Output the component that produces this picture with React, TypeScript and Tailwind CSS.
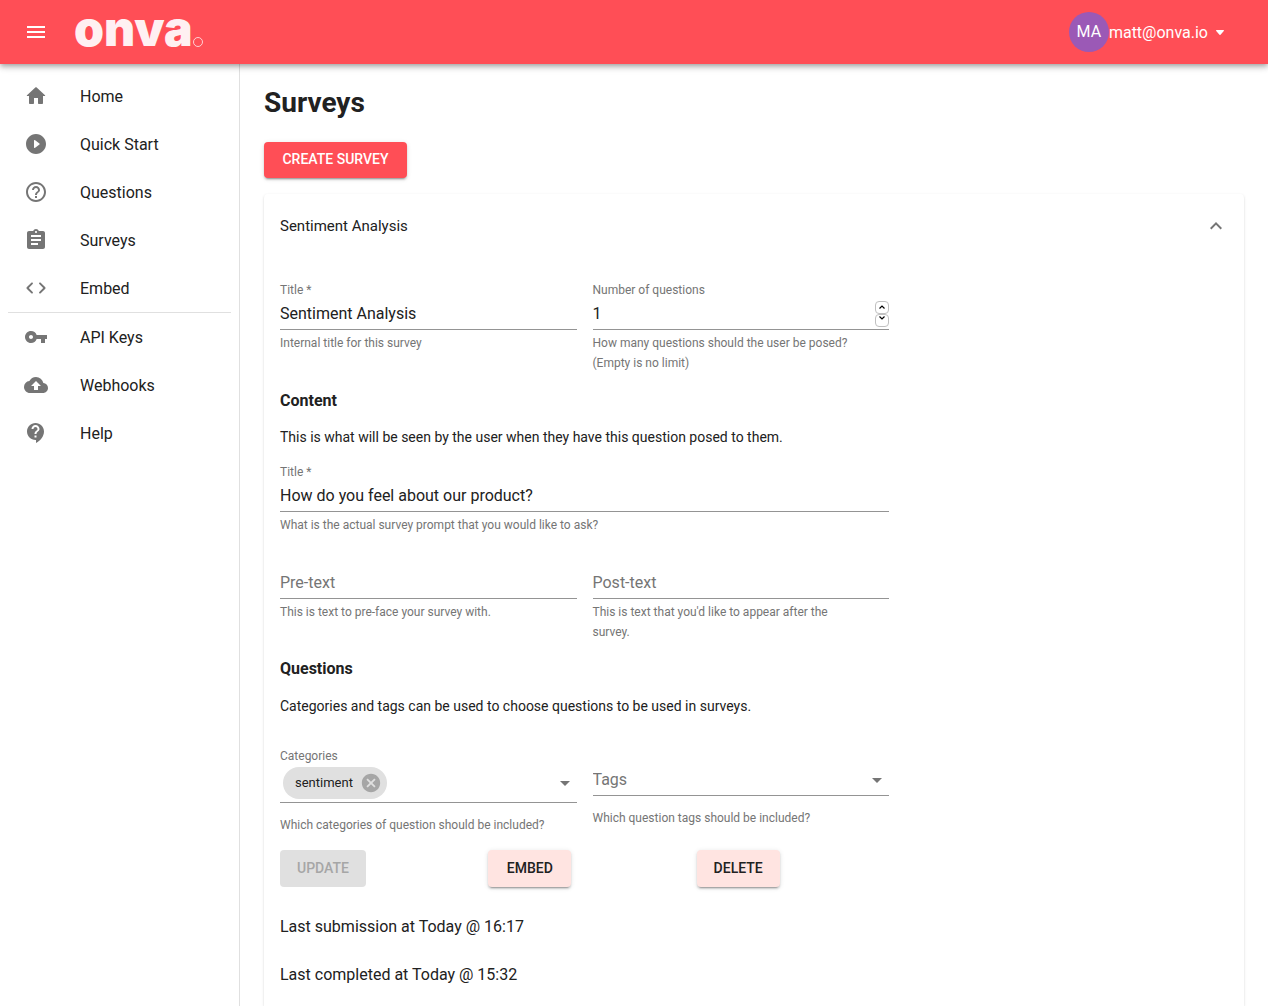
import React from "react";
import {
  MdArrowDropDown,
  MdAssignment,
  MdBackup,
  MdCancel,
  MdContactSupport,
  MdExpandLess,
  MdHelpOutline,
  MdMenu,
  MdVpnKey,
} from "react-icons/md";

const HOME_PATH =
  "M10 19v-5h4v5c0 .55.45 1 1 1h3c.55 0 1-.45 1-1v-7h1.7c.46 0 .68-.57.33-.87L12.67 3.6c-.38-.34-.96-.34-1.34 0l-8.36 7.53c-.34.3-.13.87.33.87H5v7c0 .55.45 1 1 1h3c.55 0 1-.45 1-1z";
const PLAY_PATH =
  "M12 2C6.48 2 2 6.48 2 12s4.48 10 10 10 10-4.48 10-10S17.52 2 12 2zm-2 13.5v-7c0-.41.47-.65.8-.4l4.67 3.5c.27.2.27.6 0 .8l-4.67 3.5c-.33.25-.8.01-.8-.4z";
const CODE_PATH =
  "M8.7 15.9L4.8 12l3.9-3.9c.39-.39.39-1.01 0-1.4-.39-.39-1.01-.39-1.4 0l-4.59 4.59c-.39.39-.39 1.02 0 1.41l4.59 4.6c.39.39 1.01.39 1.4 0 .39-.39.39-1.01 0-1.4zm6.6 0l3.9-3.9-3.9-3.9c-.39-.39-.39-1.01 0-1.4.39-.39 1.01-.39 1.4 0l4.59 4.59c.39.39.39 1.02 0 1.41l-4.59 4.6c-.39.39-1.01.39-1.4 0-.39-.39-.39-1.01 0-1.4z";

function PathIcon({ d }: { d: string }) {
  return (
    <svg viewBox="0 0 24 24" className="size-6" fill="currentColor" aria-hidden="true">
      <path d={d} />
    </svg>
  );
}

function NavItem({ icon, label }: { icon: React.ReactNode; label: string }) {
  return (
    <li>
      <a href="#" className="flex h-12 items-center px-6 text-base hover:bg-black/5">
        <span className="w-14 shrink-0 text-[#757575]">{icon}</span>
        <span className="pt-0.5">{label}</span>
      </a>
    </li>
  );
}

function Helper({ id, children }: { id: string; children: React.ReactNode }) {
  return (
    <p id={id} className="mt-[3px] pr-6 text-xs leading-5 text-[#757575]">
      {children}
    </p>
  );
}

type FieldProps = {
  id: string;
  label?: string;
  value?: string;
  placeholder?: string;
  helper: string;
};

function TextField({ id, label, value, placeholder, helper }: FieldProps) {
  return (
    <div className="min-w-0">
      {label && (
        <label htmlFor={id} className="block text-xs leading-4 text-[#757575]">
          {label}
        </label>
      )}
      <input
        id={id}
        type="text"
        defaultValue={value}
        placeholder={placeholder}
        aria-label={label ? undefined : placeholder}
        aria-describedby={`${id}-help`}
        className="block h-8 w-full border-b border-[#949494] bg-transparent text-base outline-none placeholder:text-[#757575]"
      />
      <Helper id={`${id}-help`}>{helper}</Helper>
    </div>
  );
}

function NumberField() {
  const [count, setCount] = React.useState("1");
  const step = (by: number) => setCount(String(Math.max(0, Number(count) + by)));
  const stepper =
    "flex h-[13px] w-3.5 items-center justify-center rounded border border-[#c0c0c0] bg-white text-black";
  return (
    <div className="min-w-0">
      <label htmlFor="count" className="block text-xs leading-4 text-[#757575]">
        Number of questions
      </label>
      <div className="flex h-8 items-center border-b border-[#949494]">
        <input
          id="count"
          type="text"
          inputMode="numeric"
          value={count}
          onChange={(e) => setCount(e.target.value)}
          aria-describedby="count-help"
          className="min-w-0 flex-1 bg-transparent text-base outline-none"
        />
        <div className="flex flex-col">
          <button type="button" aria-label="Increase" className={stepper} onClick={() => step(1)}>
            <svg viewBox="0 0 6 4" className="h-1 w-1.5" fill="none" stroke="currentColor" strokeWidth="1.2">
              <path d="M0.5 3.5L3 1l2.5 2.5" />
            </svg>
          </button>
          <button type="button" aria-label="Decrease" className={stepper} onClick={() => step(-1)}>
            <svg viewBox="0 0 6 4" className="mb-1 h-1 w-1.5" fill="none" stroke="currentColor" strokeWidth="1.2">
              <path d="M0.5 0.5L3 3l2.5-2.5" />
            </svg>
          </button>
        </div>
      </div>
      <Helper id="count-help">
        How many questions should the user be posed? (Empty is no limit)
      </Helper>
    </div>
  );
}

const softButton =
  "h-[37px] rounded bg-[#ffe4e1] px-4 pb-0.5 text-sm font-medium uppercase shadow-[0_3px_1px_-2px_rgba(0,0,0,0.2),0_2px_2px_0_rgba(0,0,0,0.14),0_1px_5px_0_rgba(0,0,0,0.12)]";

export default function App() {
  return (
    <div className="flex min-h-screen flex-col bg-white font-[Roboto,sans-serif] text-[#212121]">
      <header className="relative z-10 flex h-16 items-center bg-[#ff4e56] pr-11 pl-6 text-white shadow-[0_2px_4px_-1px_rgba(0,0,0,0.2),0_4px_5px_0_rgba(0,0,0,0.14),0_1px_10px_0_rgba(0,0,0,0.12)]">
        <button type="button" aria-label="Toggle menu">
          <MdMenu className="size-6" />
        </button>
        <a href="#" aria-label="onva" className="ml-[26px] flex h-16 items-center text-[#fff0f2]">
          <span className="pb-1.5 font-[Inter,sans-serif] text-[48px] leading-[58px] font-black">
            onva
          </span>
          <svg viewBox="0 0 10 10" className="mt-5 size-2.5" fill="none" stroke="currentColor" strokeWidth="0.8">
            <circle cx="5" cy="5" r="4.5" />
          </svg>
        </a>
        <button type="button" className="ml-auto flex items-center text-base">
          <span className="flex size-10 items-center justify-center rounded-full bg-[#9b59b6]">MA</span>
          <span className="pt-0.5">matt@onva.io</span>
          <svg viewBox="0 0 8 5" className="ml-2 h-[5px] w-2" fill="currentColor" aria-hidden="true">
            <path d="M.6 0h6.8c.5 0 .8.6.4 1L4.5 4.7a.7.7 0 0 1-1 0L.2 1C-.2.6.1 0 .6 0z" />
          </svg>
        </button>
      </header>

      <div className="flex flex-1">
        <nav className="w-60 shrink-0 border-r border-[#e0e0e0] pt-2">
          <ul>
            <NavItem icon={<PathIcon d={HOME_PATH} />} label="Home" />
            <NavItem icon={<PathIcon d={PLAY_PATH} />} label="Quick Start" />
            <NavItem icon={<MdHelpOutline className="size-6" />} label="Questions" />
            <NavItem icon={<MdAssignment className="size-6" />} label="Surveys" />
            <NavItem icon={<PathIcon d={CODE_PATH} />} label="Embed" />
          </ul>
          <hr className="mx-2 border-[#e0e0e0]" />
          <ul>
            <NavItem icon={<MdVpnKey className="size-6" />} label="API Keys" />
            <NavItem icon={<MdBackup className="size-6" />} label="Webhooks" />
            <NavItem icon={<MdContactSupport className="size-6" />} label="Help" />
          </ul>
        </nav>

        <main className="flex min-w-0 flex-1 flex-col items-start px-6 pt-[21px]">
          <h1 className="text-[28px] leading-9 font-bold">Surveys</h1>
          <button
            type="button"
            className="mt-[21px] h-9 min-w-[143px] rounded bg-[#ff4e56] px-4 pb-0.5 text-sm font-medium text-white uppercase shadow-[0_3px_1px_-2px_rgba(0,0,0,0.2),0_2px_2px_0_rgba(0,0,0,0.14),0_1px_5px_0_rgba(0,0,0,0.12)]"
          >
            Create Survey
          </button>

          <section className="mt-4 w-full flex-1 rounded-t px-4 pb-4 shadow-[0_2px_1px_-1px_rgba(0,0,0,0.2),0_1px_1px_0_rgba(0,0,0,0.14),0_1px_3px_0_rgba(0,0,0,0.12)]">
            <button
              type="button"
              aria-expanded="true"
              className="flex h-16 w-full items-center justify-between text-[15px]"
            >
              Sentiment Analysis
              <MdExpandLess className="size-6 text-[#757575]" />
            </button>

            <form className="mt-6 max-w-[609px]" onSubmit={(e) => e.preventDefault()}>
              <div className="grid grid-cols-2 gap-4">
                <TextField
                  id="title"
                  label="Title *"
                  value="Sentiment Analysis"
                  helper="Internal title for this survey"
                />
                <NumberField />
              </div>

              <h2 className="mt-4 text-base leading-6 font-bold">Content</h2>
              <p className="mt-3.5 mb-[17px] text-sm leading-5">
                This is what will be seen by the user when they have this question posed to them.
              </p>
              <TextField
                id="prompt"
                label="Title *"
                value="How do you feel about our product?"
                helper="What is the actual survey prompt that you would like to ask?"
              />
              <div className="mt-8 grid grid-cols-2 gap-4">
                <TextField
                  id="pre"
                  placeholder="Pre-text"
                  helper="This is text to pre-face your survey with."
                />
                <TextField
                  id="post"
                  placeholder="Post-text"
                  helper="This is text that you'd like to appear after the survey."
                />
              </div>

              <h2 className="mt-[15px] text-base leading-6 font-bold">Questions</h2>
              <p className="mt-[15px] text-sm leading-5">
                Categories and tags can be used to choose questions to be used in surveys.
              </p>

              <div className="mt-8 grid grid-cols-2 items-start gap-4">
                <div className="min-w-0">
                  <label htmlFor="categories" className="block text-xs leading-4 text-[#757575]">
                    Categories
                  </label>
                  <div className="flex h-[39px] items-center border-b border-[#949494] pl-[3px]">
                    <span className="flex h-8 items-center rounded-full bg-[#e0e0e0] pr-[5px] pl-3 text-[13px]">
                      sentiment
                      <button type="button" aria-label="Remove sentiment" className="ml-[7px] text-[#a6a6a6]">
                        <MdCancel className="size-[22px]" />
                      </button>
                    </span>
                    <select
                      id="categories"
                      aria-describedby="categories-help"
                      className="h-8 min-w-0 flex-1 appearance-none bg-transparent outline-none"
                    />
                    <MdArrowDropDown className="size-6 text-[#757575]" />
                  </div>
                  <p id="categories-help" className="mt-3 text-xs leading-5 text-[#757575]">
                    Which categories of question should be included?
                  </p>
                </div>
                <div className="min-w-0 pt-4">
                  <div className="flex h-8 items-center border-b border-[#949494]">
                    <select
                      aria-label="Tags"
                      aria-describedby="tags-help"
                      className="h-7 min-w-0 flex-1 appearance-none bg-transparent text-base text-[#757575] outline-none"
                    >
                      <option>Tags</option>
                    </select>
                    <MdArrowDropDown className="size-6 text-[#757575]" />
                  </div>
                  <p id="tags-help" className="mt-3 text-xs leading-5 text-[#757575]">
                    Which question tags should be included?
                  </p>
                </div>
              </div>

              <div className="mt-[15px] grid grid-cols-3 justify-items-start gap-4">
                <button
                  type="submit"
                  disabled
                  className="h-[37px] min-w-[86px] rounded bg-[#e0e0e0] px-4 pb-0.5 text-sm font-medium text-[#a6a6a6] uppercase"
                >
                  Update
                </button>
                <button type="button" className={softButton + " min-w-[83px]"}>
                  Embed
                </button>
                <button type="button" className={softButton + " min-w-[83px]"}>
                  Delete
                </button>
              </div>
            </form>

            <p className="mt-7 text-base leading-6">Last submission at Today @ 16:17</p>
            <p className="mt-6 text-base leading-6">Last completed at Today @ 15:32</p>
          </section>
        </main>
      </div>
    </div>
  );
}
